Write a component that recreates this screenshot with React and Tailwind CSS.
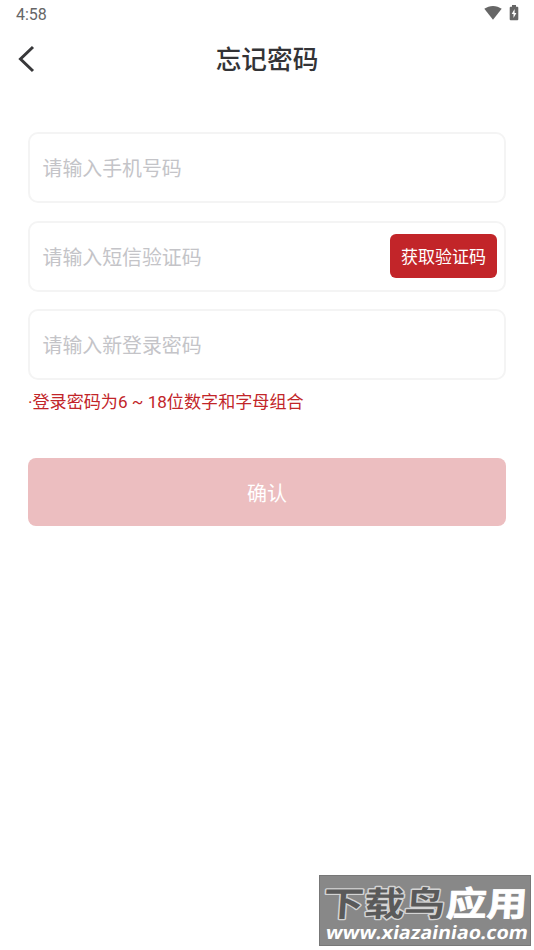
function StatusBar() {
  return (
    <div className="flex h-7 items-center justify-between pl-4 pr-[15px] text-[#666]">
      <span className="pt-px font-['Roboto',sans-serif] text-base leading-7">4:58</span>
      <div className="flex h-7 items-start gap-[7px] pt-[5px]">
        <svg width="18" height="15" viewBox="0 0 18 15" fill="#666">
          <path d="M0.3 3.8C5.3-.1 12.7-.1 17.7 3.8L9 14.7Z" />
        </svg>
        <svg width="10" height="16" viewBox="0 0 10 16">
          <path d="M3 0H7V1.7H8.3Q9.3 1.7 9.3 2.7V14.2Q9.3 15.2 8.3 15.2H1.7Q.7 15.2.7 14.2V2.7Q.7 1.7 1.7 1.7H3Z" fill="#666" />
          <path d="M5.6 3.9L2.7 9H4.5V13L7.4 7.9H5.6Z" fill="#fff" />
        </svg>
      </div>
    </div>
  );
}

function Field({ placeholder, children }) {
  return (
    <div className="flex h-[71px] items-center justify-between rounded-[10px] border-2 border-[#f4f4f4] pl-[12.5px] pr-[7px]">
      <span className="pt-[5px] text-[19.9px] text-[#c4c4c8]">{placeholder}</span>
      {children}
    </div>
  );
}

function Watermark() {
  return (
    <div className="absolute left-[319px] top-[875px] h-[71px] w-[212px] overflow-hidden border border-[#777] bg-[#888]">
      <svg width="210" height="69" viewBox="0 0 210 69">
        <g transform="translate(2.5 40) skewX(-4)" fontFamily="'Noto Sans CJK SC', sans-serif" fontWeight="700" fontSize="34" strokeLinejoin="round">
          <text x="0" y="0" textLength="122" lengthAdjust="spacingAndGlyphs" fill="#5a5a5a" stroke="#d4d4d4" strokeWidth="2.6" paintOrder="stroke">下载鸟</text>
          <text x="123" y="0" textLength="81" lengthAdjust="spacingAndGlyphs" fill="#fff" stroke="#fff" strokeWidth="0.8">应用</text>
        </g>
        <text transform="translate(5 63) skewX(-10)" x="0" y="0" textLength="202" lengthAdjust="spacingAndGlyphs" fontFamily="'Open Sans', sans-serif" fontWeight="700" fontSize="18.5" fill="#fff">www.xiazainiao.com</text>
      </svg>
    </div>
  );
}

export default function App() {
  return (
    <div className="relative h-[950px] w-[534px] overflow-hidden bg-white font-['Roboto','Noto_Sans_CJK_SC',sans-serif]">
      <StatusBar />
      <header className="grid h-[62px] grid-cols-[60px_1fr_60px] items-center">
        <svg width="20" height="30" viewBox="0 0 20 30" className="ml-4" fill="none" stroke="#38383a" strokeWidth="3">
          <path d="M17 3L4.5 15L17 27" />
        </svg>
        <h1 className="pt-[2px] text-center text-[25.7px] font-medium leading-[60px] text-[#333336]">忘记密码</h1>
      </header>
      <main className="pl-7 pr-7 pt-[42px]">
        <div className="flex flex-col gap-[17.5px]">
          <Field placeholder="请输入手机号码" />
          <Field placeholder="请输入短信验证码">
            <button className="h-11 w-[107px] rounded-md bg-[#c22529] pt-[3px] text-[17px] text-white">获取验证码</button>
          </Field>
          <Field placeholder="请输入新登录密码" />
        </div>
        <p className="mt-2 h-[26px] whitespace-nowrap pt-px text-[17.1px] leading-[26px] text-[#c22529]">·登录密码为6 ~ 18位数字和字母组合</p>
        <button className="mt-[44px] h-[68px] w-full rounded-lg bg-[#ecbec0] pt-[3px] text-xl text-white">确认</button>
      </main>
      <Watermark />
    </div>
  );
}
